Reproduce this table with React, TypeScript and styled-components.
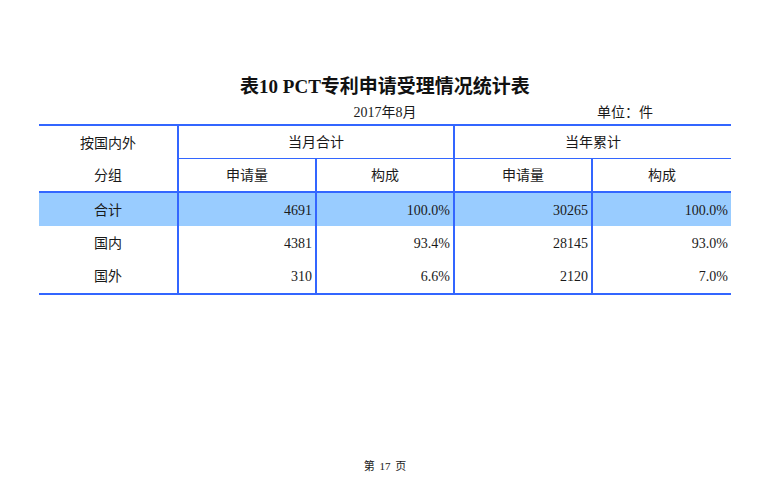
import React from "react";
import styled, { createGlobalStyle } from "styled-components";

const LINE = "#3366ff";
const FILL = "#99ccff";

const GlobalStyle = createGlobalStyle`
  html, body {
    margin: 0;
    padding: 0;
    background: #ffffff;
  }
  body {
    font-family: "Liberation Serif", "Noto Sans CJK SC", serif;
    color: #1a1a1a;
  }
`;

const Page = styled.div`
  width: 761px;
  height: 495px;
  box-sizing: border-box;
  padding: 74px 0 0 39px;
  overflow: hidden;
`;

const Column = styled.div`
  width: 692px;
  display: flex;
  flex-direction: column;
`;

const Title = styled.h1`
  margin: 0;
  font-size: 19px;
  line-height: 25px;
  font-weight: 700;
  text-align: center;
  color: #111;
`;

const SubHeader = styled.div`
  margin-top: 5px;
  display: grid;
  grid-template-columns: 1fr auto 1fr;
  font-size: 14px;
  line-height: 18px;
`;

const DateText = styled.span`
  grid-column: 2;
`;

const Unit = styled.span`
  grid-column: 3;
  justify-self: end;
  margin-right: 78px;
`;

const Table = styled.div`
  margin-top: 2px;
  border-top: 2px solid ${LINE};
  border-bottom: 2px solid ${LINE};
`;

const Grid = styled.div<{ $fill?: boolean; $height?: number; $thick?: boolean }>`
  display: grid;
  grid-template-columns: 138px 138px 138px 138px 140px;
  background: ${(p) => (p.$fill ? FILL : "transparent")};
  border-bottom: ${(p) => (p.$thick ? `2px solid ${LINE}` : "none")};
  height: ${(p) => (p.$height ? `${p.$height}px` : "auto")};
`;

const HeaderGrid = styled(Grid)`
  grid-template-rows: 33px 32px;
`;

const Cell = styled.div<{
  $align?: "center" | "right";
  $left?: boolean;
  $bottom?: boolean;
  $span?: number;
}>`
  box-sizing: border-box;
  display: flex;
  align-items: center;
  justify-content: ${(p) => (p.$align === "right" ? "flex-end" : "center")};
  padding: 2px ${(p) => (p.$align === "right" ? "3px" : "0")} 0 0;
  font-size: 14px;
  line-height: 16px;
  border-left: ${(p) => (p.$left ? `2px solid ${LINE}` : "none")};
  border-bottom: ${(p) => (p.$bottom ? `1px solid ${LINE}` : "none")};
  grid-column: ${(p) => (p.$span ? `span ${p.$span}` : "auto")};
`;

const Footer = styled.div`
  margin-top: 163px;
  text-align: center;
  font-size: 11px;
  line-height: 16px;
  word-spacing: 2px;
`;

const rows = [
  { name: "合计", a: "4691", b: "100.0%", c: "30265", d: "100.0%", fill: true, h: 33 },
  { name: "国内", a: "4381", b: "93.4%", c: "28145", d: "93.0%", fill: false, h: 33 },
  { name: "国外", a: "310", b: "6.6%", c: "2120", d: "7.0%", fill: false, h: 34 },
];

export default function App() {
  return (
    <>
      <GlobalStyle />
      <Page>
        <Column>
          <Title>表10 PCT专利申请受理情况统计表</Title>
          <SubHeader>
            <DateText>2017年8月</DateText>
            <Unit>单位：件</Unit>
          </SubHeader>
          <Table>
            <HeaderGrid $thick>
              <Cell>按国内外</Cell>
              <Cell $left $bottom $span={2}>当月合计</Cell>
              <Cell $left $bottom $span={2}>当年累计</Cell>
              <Cell>分组</Cell>
              <Cell $left>申请量</Cell>
              <Cell $left>构成</Cell>
              <Cell $left>申请量</Cell>
              <Cell $left>构成</Cell>
            </HeaderGrid>
            {rows.map((r) => (
              <Grid key={r.name} $fill={r.fill} $height={r.h}>
                <Cell>{r.name}</Cell>
                <Cell $left $align="right">{r.a}</Cell>
                <Cell $left $align="right">{r.b}</Cell>
                <Cell $left $align="right">{r.c}</Cell>
                <Cell $left $align="right">{r.d}</Cell>
              </Grid>
            ))}
          </Table>
          <Footer>第 17 页</Footer>
        </Column>
      </Page>
    </>
  );
}
